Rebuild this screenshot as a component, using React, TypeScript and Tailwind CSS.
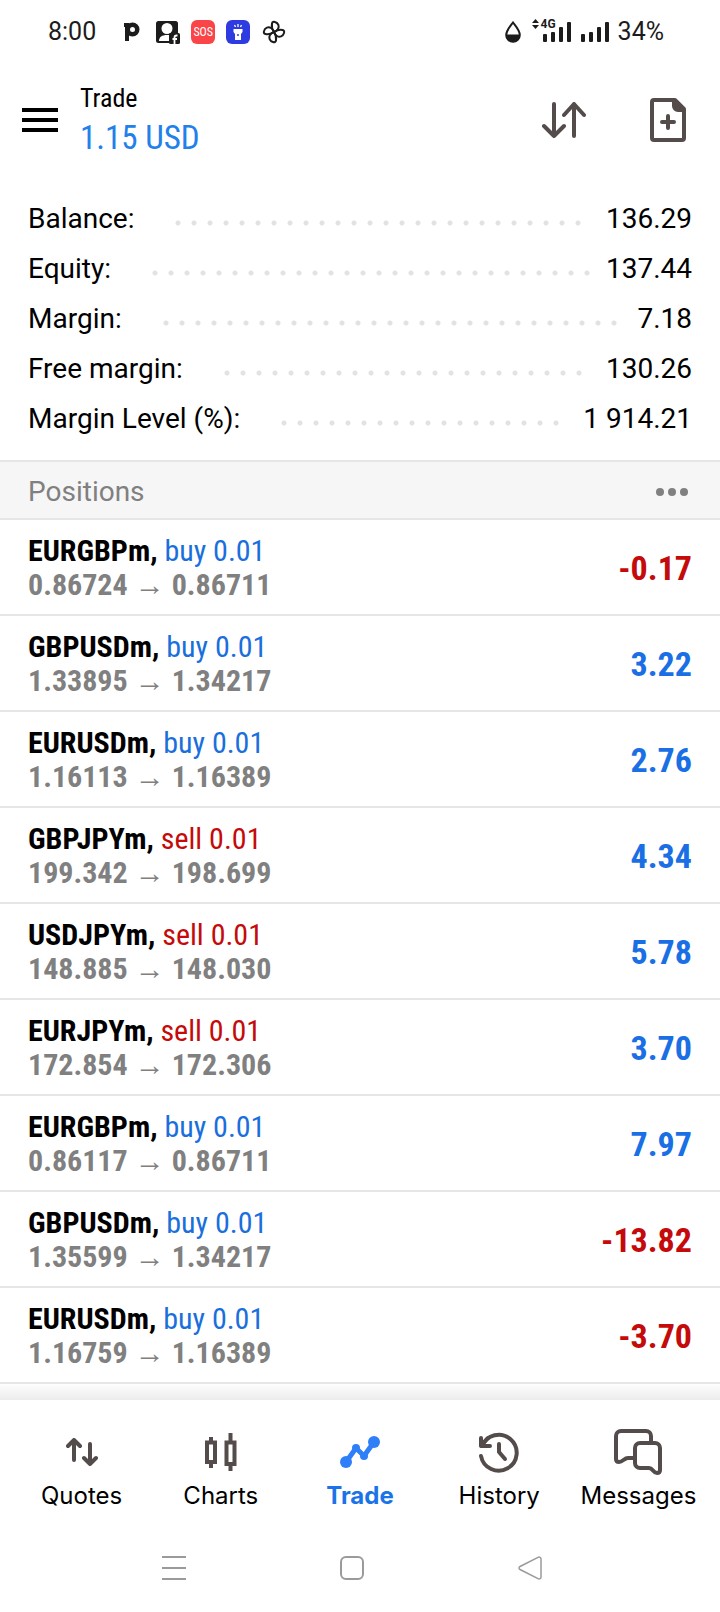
import type { ReactNode } from "react";

interface Position {
  symbol: string;
  side: "buy" | "sell";
  open: string;
  current: string;
  profit: string;
}

const summary = [
  { label: "Balance:", value: "136.29" },
  { label: "Equity:", value: "137.44" },
  { label: "Margin:", value: "7.18" },
  { label: "Free margin:", value: "130.26" },
  { label: "Margin Level (%):", value: "1 914.21" },
];

const positions: Position[] = [
  { symbol: "EURGBPm", side: "buy", open: "0.86724", current: "0.86711", profit: "-0.17" },
  { symbol: "GBPUSDm", side: "buy", open: "1.33895", current: "1.34217", profit: "3.22" },
  { symbol: "EURUSDm", side: "buy", open: "1.16113", current: "1.16389", profit: "2.76" },
  { symbol: "GBPJPYm", side: "sell", open: "199.342", current: "198.699", profit: "4.34" },
  { symbol: "USDJPYm", side: "sell", open: "148.885", current: "148.030", profit: "5.78" },
  { symbol: "EURJPYm", side: "sell", open: "172.854", current: "172.306", profit: "3.70" },
  { symbol: "EURGBPm", side: "buy", open: "0.86117", current: "0.86711", profit: "7.97" },
  { symbol: "GBPUSDm", side: "buy", open: "1.35599", current: "1.34217", profit: "-13.82" },
  { symbol: "EURUSDm", side: "buy", open: "1.16759", current: "1.16389", profit: "-3.70" },
];

const BLADE = "M12 12C10 9 9.5 6 10 3.5c.3-1.5 1.5-2 3-1.500 3.500 1 4.500 4.500 3 7-.8 1.400-2 2.500-4 3z";

function StatusBar() {
  return (
    <div className="flex h-16 items-center justify-between pl-12 pr-14 text-[25px] text-[#1c1c1c]">
      <div className="flex items-center">
        <span>8:00</span>
        <svg className="ml-7" width="16" height="20" viewBox="0 0 16 20" fill="none">
          <path d="M0 1h5v18H1V5H0z" fill="currentColor" />
          <circle cx="8.5" cy="7.5" r="4.75" stroke="currentColor" strokeWidth="4.5" />
        </svg>
        <svg className="ml-4" width="24" height="24" viewBox="0 0 24 24">
          <rect x="0" y="1" width="22" height="22" rx="2.5" fill="currentColor" />
          <circle cx="11" cy="8.5" r="5.5" fill="#fff" />
          <path d="M3 21c0-4 3-6 8-6h3v6z" fill="#fff" />
          <rect x="13" y="13" width="11" height="11" rx="1.5" fill="currentColor" />
          <path d="M21.5 15.5h-1c-1.4 0-2 .7-2 2V24M16.5 19H21" stroke="#fff" strokeWidth="1.8" fill="none" />
        </svg>
        <span className="ml-[11px] flex size-6 items-center justify-center rounded-md bg-[#fa4447] font-['Roboto_Condensed',sans-serif] text-[12px] text-white">
          SOS
        </span>
        <svg className="ml-[11px]" width="24" height="24" viewBox="0 0 24 24">
          <rect width="24" height="24" rx="6" fill="#2d3be0" />
          <path d="M7.5 9h9v3L15 14v6H9v-6l-1.500-2z" fill="#fff" />
          <path d="M12 4v3M8.5 5l1 2M15.5 5l-1 2" stroke="#fff" strokeWidth="1.3" />
          <circle cx="12" cy="15" r="1" fill="#2d3be0" />
        </svg>
        <svg className="ml-3" width="24" height="24" viewBox="0 0 24 24" fill="none" stroke="currentColor" strokeWidth="2" strokeLinejoin="round">
          <path d={BLADE} />
          <path d={BLADE} transform="rotate(90 12 12)" />
          <path d={BLADE} transform="rotate(180 12 12)" />
          <path d={BLADE} transform="rotate(270 12 12)" />
        </svg>
      </div>

      <div className="flex items-center">
        <svg width="16" height="22" viewBox="0 0 16 22">
          <path d="M8 1.5C5 5.5 1.2 9.5 1.2 14a6.8 6.8 0 0 0 13.6 0C14.8 9.5 11 5.5 8 1.5z" fill="none" stroke="currentColor" strokeWidth="2" />
          <path d="M1 13.500h14c0 4.500-3 7.300-7 7.300s-7-2.800-7-7.300z" fill="currentColor" />
        </svg>
        <div className="relative ml-[22px]">
          <span className="absolute -left-[11px] -top-1 flex items-center gap-[2px] text-[12px] font-bold leading-none">
            <svg width="7" height="10" viewBox="0 0 7 10" fill="currentColor">
              <path d="M3.5 0L7 4H0zM3.5 10L0 6h7z" />
            </svg>
            4G
          </span>
          <SignalBars />
        </div>
        <div className="ml-[9px] mr-2">
          <SignalBars />
        </div>
        <span>34%</span>
      </div>
    </div>
  );
}

function SignalBars() {
  return (
    <svg width="29" height="20" viewBox="0 0 29 20" fill="currentColor">
      <rect x="0" y="12" width="4" height="8" rx="1" />
      <rect x="8" y="10" width="4" height="10" rx="1" />
      <rect x="16" y="5" width="4" height="15" rx="1" />
      <rect x="24" y="0" width="4" height="20" rx="1" />
    </svg>
  );
}

function Header() {
  return (
    <header className="flex h-28 items-center justify-between pl-[22px] pr-[34px]">
      <div className="flex items-center gap-[22px]">
        <button aria-label="Menu" className="text-black">
          <svg width="36" height="24" viewBox="0 0 36 24" fill="currentColor">
            <path d="M0 0h36v4H0zM0 10h36v4H0zM0 20h36v4H0z" />
          </svg>
        </button>
        <div className="pb-1 font-['Roboto_Condensed',sans-serif]">
          <h1 className="text-[26px] leading-10 text-black">Trade</h1>
          <p className="text-[33px] leading-10 text-[#2180ea]">1.15 USD</p>
        </div>
      </div>
      <div className="flex items-center gap-16 text-[#544c4a]">
        <button aria-label="Sort">
          <svg width="44" height="36" viewBox="0 0 44 36" fill="none" stroke="currentColor" strokeWidth="4" strokeLinecap="round" strokeLinejoin="round">
            <path d="M12 2v32M2 24l10 10 10-10M32 34V2M22 13L32 2l10 11" />
          </svg>
        </button>
        <button aria-label="New order">
          <svg width="36" height="44" viewBox="0 0 36 44" fill="none" stroke="currentColor" strokeWidth="4" strokeLinecap="round" strokeLinejoin="round">
            <path d="M4 2h21l9 9v29a2 2 0 0 1-2 2H4a2 2 0 0 1-2-2V4a2 2 0 0 1 2-2z" />
            <path d="M24 4v4a4 4 0 0 0 4 4h5z" fill="currentColor" />
            <path d="M18 18v12M12 24h12" />
          </svg>
        </button>
      </div>
    </header>
  );
}

function Summary() {
  return (
    <dl className="px-7 pb-4 pt-[18px] text-[28px] leading-[50px] text-black">
      {summary.map(({ label, value }) => (
        <div key={label} className="flex items-center">
          <dt>{label}</dt>
          <div className="ml-9 mr-4 mt-2 h-4 flex-1 bg-[radial-gradient(circle,#e2e2e2_2px,transparent_3px)] bg-[length:16px_16px]" />
          <dd>{value}</dd>
        </div>
      ))}
    </dl>
  );
}

function PositionRow({ symbol, side, open, current, profit }: Position) {
  return (
    <li className="flex h-24 items-center justify-between border-b-2 border-[#e6e6e6] px-7 pt-[2px] font-['Roboto_Condensed',sans-serif]">
      <div className="text-[30px] leading-[34px]">
        <p className="font-bold text-black">
          {symbol},{" "}
          <span className={`font-normal ${side === "buy" ? "text-[#1a6fdc]" : "text-[#c40a0a]"}`}>{side} 0.01</span>
        </p>
        <p className="font-bold text-[#808080]">
          {open}
          <span className="mx-[7px]">→</span>
          {current}
        </p>
      </div>
      <p className={`text-[34px] font-bold ${profit.startsWith("-") ? "text-[#c40a0a]" : "text-[#1a6fe4]"}`}>{profit}</p>
    </li>
  );
}

function Tab({ label, active, children }: { label: string; active?: boolean; children: ReactNode }) {
  return (
    <a href="#" className="flex flex-1 flex-col items-center" aria-current={active ? "page" : undefined}>
      <span className={`flex h-14 items-center ${active ? "text-[#2f7ff8]" : "text-[#544c4a]"}`}>{children}</span>
      <span className={active ? "font-bold text-[#1a73e8]" : "text-black"}>{label}</span>
    </a>
  );
}

function TabBar() {
  return (
    <nav className="flex h-[126px] px-3 pt-6 font-[Inter,sans-serif] text-[24px] leading-8">
      <Tab label="Quotes">
        <svg width="32" height="28" viewBox="0 0 32 28" fill="none" stroke="currentColor" strokeWidth="4" strokeLinecap="round" strokeLinejoin="round">
          <path d="M8 22V2M2 8l6-6 6 6M24 6v20M18 20l6 6 6-6" />
        </svg>
      </Tab>
      <Tab label="Charts">
        <svg width="32" height="38" viewBox="0 0 32 38" fill="none" stroke="currentColor" strokeWidth="4">
          <path d="M2 9.5h8V29H2zM6 4v5M6 29v6M21.5 9.5h8V31h-8zM25.5 0v9M25.5 31v7" />
        </svg>
      </Tab>
      <Tab label="Trade" active>
        <svg width="42" height="34" viewBox="0 0 42 34" fill="currentColor">
          <path d="M7 27L17 13l8 8L35 7" fill="none" stroke="currentColor" strokeWidth="5" />
          <circle cx="7" cy="27" r="6" />
          <circle cx="17" cy="13" r="4" />
          <circle cx="25" cy="21" r="4" />
          <circle cx="35" cy="7" r="6" />
        </svg>
      </Tab>
      <Tab label="History">
        <svg width="42" height="42" viewBox="0 0 42 42" fill="none" stroke="currentColor" strokeWidth="4" strokeLinecap="round" strokeLinejoin="round">
          <path d="M4 15a18 18 0 1 1-1 10" />
          <path d="M3 7v8h9M3 15l7-8" />
          <path d="M21 13v8l6 7" />
        </svg>
      </Tab>
      <Tab label="Messages">
        <svg width="48" height="46" viewBox="0 0 48 46" fill="none" stroke="currentColor" strokeWidth="4" strokeLinecap="round" strokeLinejoin="round">
          <path d="M21 29h-7c-4 0-5 4-9 4-2 0-3-1-3-3V7a5 5 0 0 1 5-5h25a5 5 0 0 1 5 5v7" />
          <path d="M26 14h15a5 5 0 0 1 5 5v22c0 2-1 3-3 3-4 0-4-5-8-5h-9a5 5 0 0 1-5-5V19a5 5 0 0 1 5-5z" />
        </svg>
      </Tab>
    </nav>
  );
}

function SystemNav() {
  return (
    <div className="flex h-[86px] justify-center gap-[154px] pr-4 pt-[30px] text-[#9a9a9a]">
      <button aria-label="Recent apps" className="h-6">
        <svg width="24" height="24" viewBox="0 0 24 24" stroke="currentColor" strokeWidth="2">
          <path d="M0 1h24M0 12h24M0 23h24" />
        </svg>
      </button>
      <button aria-label="Home" className="h-6">
        <svg width="24" height="24" viewBox="0 0 24 24" fill="none" stroke="currentColor" strokeWidth="2">
          <rect x="1" y="1" width="22" height="22" rx="5" />
        </svg>
      </button>
      <button aria-label="Back" className="h-6">
        <svg width="24" height="24" viewBox="0 0 24 24" fill="none" stroke="currentColor" strokeWidth="1.5" strokeLinejoin="round">
          <path d="M2 10.5L20 1.300c1.500-.8 3 .2 3 1.700v18c0 1.500-1.500 2.500-3 1.700L2 13.500c-1.300-.7-1.300-2.300 0-3z" />
        </svg>
      </button>
    </div>
  );
}

export default function App() {
  return (
    <div className="flex min-h-screen flex-col bg-white font-[Roboto,sans-serif]">
      <StatusBar />
      <Header />
      <Summary />
      <div className="flex h-[60px] items-center justify-between border-y-2 border-[#e6e6e6] bg-[#f6f6f6] px-7 pt-[3px] text-[#808080]">
        <h2 className="text-[28px]">Positions</h2>
        <button aria-label="Position options" className="pr-1">
          <svg width="32" height="8" viewBox="0 0 32 8" fill="currentColor">
            <circle cx="4" cy="4" r="4" />
            <circle cx="16" cy="4" r="4" />
            <circle cx="28" cy="4" r="4" />
          </svg>
        </button>
      </div>
      <ul>
        {positions.map((position, i) => (
          <PositionRow key={i} {...position} />
        ))}
      </ul>
      <div className="min-h-4 flex-1 bg-linear-to-b from-[#fdfdfd] to-[#ececec]" />
      <TabBar />
      <SystemNav />
    </div>
  );
}
